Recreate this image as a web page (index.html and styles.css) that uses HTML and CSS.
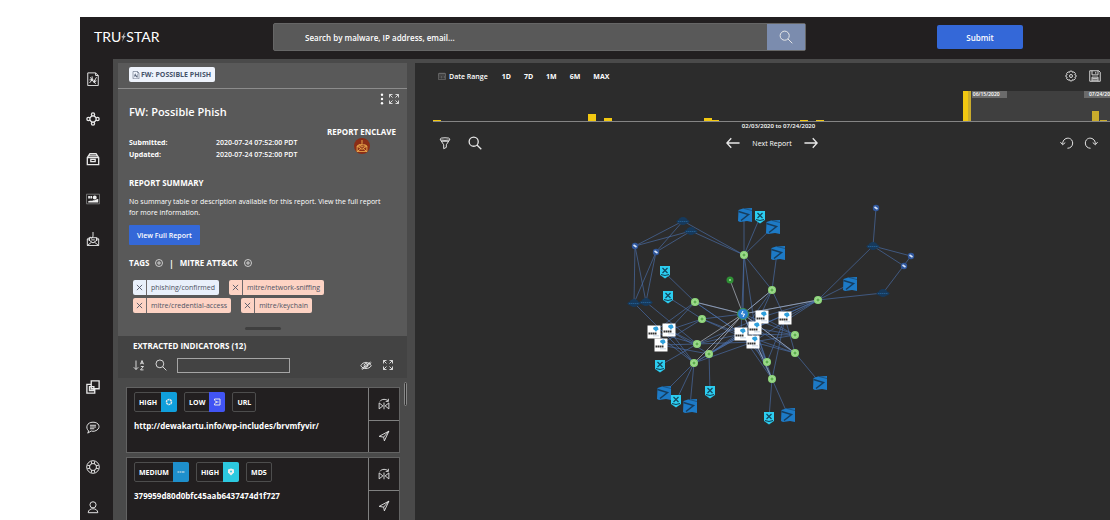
FILE: index.html
```
<!DOCTYPE html>
<html lang="en">
<head>
    <meta charset="UTF-8">
    <meta name="viewport" content="width=device-width, initial-scale=1.0">
    <title>TruSTAR</title>
    <link rel="stylesheet" href="styles.css">
</head>
<body>
    <!-- Shared icons -->
    <svg class="sprite" aria-hidden="true">
        <symbol id="i-search" viewBox="0 0 16 16"><circle cx="6.5" cy="6.5" r="5.2"/><path d="M10.200 10.200l5 5"/></symbol>
        <symbol id="i-report" viewBox="0 0 16 16"><path d="M2 1h9l3 3v11.500H2zM11 1v3h3"/><path d="M4 12.500l3-3.500 2 2 3-5M5 6l2 3M9 11l2 2.500M9 11l3-1M4 9h3M7 9V5"/><circle cx="7" cy="9" r="1"/><circle cx="9.5" cy="11" r="1"/></symbol>
        <symbol id="i-expand" viewBox="0 0 16 16"><path d="M2 6V2h4M10 2h4v4M14 10v4h-4M6 14H2v-4M2 2l4 4M14 2l-4 4M14 14l-4-4M2 14l4-4"/></symbol>
        <symbol id="i-plus" viewBox="0 0 16 16"><circle cx="8" cy="8" r="7"/><path d="M8 4v8M4 8h8"/></symbol>
        <symbol id="i-mirror" viewBox="0 0 16 16"><path d="M1.500 6.500v8l5-4zM14.500 6.500v8l-5-4zM8 6v9M2.500 4.500C5 1 11 1 13.500 4M13.800 1v3.500h-3.500"/></symbol>
        <symbol id="i-send" viewBox="0 0 16 16"><path d="M14.500 1.500L8.500 14.500 7.500 9.500 1.500 8.500zM14.500 1.500l-7 8"/></symbol>
        <symbol id="i-mail" viewBox="0 0 16 16"><path d="M1.500 8v7.500h13V8L12 6.500M4 6.500L1.500 8 8 12.500 14.500 8M1.500 15.500l5-4M14.500 15.500l-5-4M4 9.500v-3h8v3M8 0v4.500c0 3.500-3.500 3-3 1M6 9h4"/></symbol>
    </svg>

    <div class="app">
        <header class="topbar">
            <div class="logo">TRU<svg viewBox="0 0 8 16" aria-hidden="true"><path d="M6 0L5 6l3 1-3 2-3 7 1-7-3-1 3-2z"/></svg>STAR</div>
            <form class="search">
                <input type="text" aria-label="Search" placeholder="Search by malware, IP address, email...">
                <button type="button" aria-label="Search"><svg class="icon"><use href="#i-search"/></svg></button>
            </form>
            <button class="btn submit-btn" type="button">Submit</button>
        </header>

        <div class="body">
            <nav class="sidebar">
                <a href="#" aria-label="Reports"><svg class="icon"><use href="#i-report"/></svg></a>
                <a href="#" aria-label="Graph"><svg class="icon bold" viewBox="0 0 16 16"><path d="M4.200 6.800l2.600-2.600M9.200 4.200l2.600 2.600M11.800 9.200l-2.600 2.600M6.800 11.800L4.200 9.200"/><circle cx="8" cy="2.800" r="1.800"/><circle cx="13.200" cy="8" r="1.800"/><circle cx="8" cy="13.200" r="1.800"/><circle cx="2.800" cy="8" r="1.800"/></svg></a>
                <a href="#" aria-label="Archive"><svg class="icon bold" viewBox="0 0 16 16"><path d="M1.500 6.500l3-4.500h7l3 4.500v8h-13zM1.500 6.500h13M3.500 4.500h9M5.500 8.500h5V11h-5z"/></svg></a>
                <a href="#" aria-label="Dashboard"><svg class="icon" viewBox="0 0 16 16"><path class="dim" d="M.5 2.500h15v11H.5z"/><path class="solid" d="M2.500 4.500h2v3h-2zM5 4.500h2v3H5zM10 4a2 2 0 1 1 0 4.500A2.200 2.200 0 0 1 10 4zM2.500 10.500c3-1 4 0 6-1 2 0 4-2 5.500-1.500V12H2.500z"/></svg></a>
                <a href="#" aria-label="Phishing"><svg class="icon"><use href="#i-mail"/></svg></a>
                <a href="#" class="push" aria-label="Copy"><svg class="icon bold" viewBox="0 0 16 16"><path d="M6 1h9v9H6zM6 5H1v10h9v-5M4 7.500h5V12H4z"/></svg></a>
                <a href="#" aria-label="Chat"><svg class="icon" viewBox="0 0 16 16"><path d="M3 12.500C-1 9 1 2.500 8 2.500s9 6 4.500 9C9 14 6 12.500 6 12.500L2 15zM4.500 6h7M4.500 8h7M4.500 10h5"/></svg></a>
                <a href="#" aria-label="Help"><svg class="icon" viewBox="0 0 16 16"><circle cx="8" cy="8" r="7.200"/><circle cx="8" cy="8" r="4"/><path d="M6 1.500l.5 3M10 1.500l-.5 3M6 14.500l.5-3M10 14.500l-.5-3M1.500 6l3 .5M1.500 10l3-.5M14.500 6l-3 .5M14.500 10l-3-.5"/></svg></a>
                <a href="#" aria-label="Profile"><svg class="icon" viewBox="0 0 16 16"><circle cx="8" cy="5.500" r="3.500"/><path d="M2.500 14.500c0-6 11-6 11 0z"/></svg></a>
            </nav>

            <section class="panel">
                <div class="report">
                    <div class="tabs">
                        <a class="tab" href="#"><svg class="icon xs"><use href="#i-report"/></svg>FW: POSSIBLE PHISH</a>
                    </div>
                    <div class="report-body">
                        <div class="report-tools">
                            <button type="button" aria-label="More"><svg class="icon dots" viewBox="0 0 4 14"><circle cx="2" cy="2" r="1.4"/><circle cx="2" cy="7" r="1.4"/><circle cx="2" cy="12" r="1.4"/></svg></button>
                            <button type="button" aria-label="Expand"><svg class="icon sm"><use href="#i-expand"/></svg></button>
                        </div>
                        <h1>FW: Possible Phish</h1>
                        <div class="meta">
                            <dl>
                                <dt>Submitted:</dt><dd>2020-07-24 07:52:00 PDT</dd>
                                <dt>Updated:</dt><dd>2020-07-24 07:52:00 PDT</dd>
                            </dl>
                            <div class="enclave">
                                <h2>REPORT ENCLAVE</h2>
                                <span class="enclave-icon"><svg class="icon sm"><use href="#i-mail"/></svg></span>
                            </div>
                        </div>
                        <h2>REPORT SUMMARY</h2>
                        <p>No summary table or description available for this report. View the full report for more information.</p>
                        <button class="btn" type="button">View Full Report</button>
                        <div class="tag-heads">
                            <h2>TAGS</h2>
                            <button type="button" aria-label="Add tag"><svg class="icon xs"><use href="#i-plus"/></svg></button>
                            <span>|</span>
                            <h2>MITRE ATT&amp;CK</h2>
                            <button type="button" aria-label="Add technique"><svg class="icon xs"><use href="#i-plus"/></svg></button>
                        </div>
                        <div class="tags">
                            <span class="tag blue"><button type="button" aria-label="Remove"><svg class="icon x" viewBox="0 0 8 8"><path d="M1 1l6 6M7 1L1 7"/></svg></button><span>phishing/confirmed</span></span>
                            <span class="tag"><button type="button" aria-label="Remove"><svg class="icon x" viewBox="0 0 8 8"><path d="M1 1l6 6M7 1L1 7"/></svg></button><span>mitre/network-sniffing</span></span>
                            <span class="tag"><button type="button" aria-label="Remove"><svg class="icon x" viewBox="0 0 8 8"><path d="M1 1l6 6M7 1L1 7"/></svg></button><span>mitre/credential-access</span></span>
                            <span class="tag"><button type="button" aria-label="Remove"><svg class="icon x" viewBox="0 0 8 8"><path d="M1 1l6 6M7 1L1 7"/></svg></button><span>mitre/keychain</span></span>
                        </div>
                        <div class="grip"></div>
                    </div>
                </div>

                <div class="indicators-head">
                    <h2>EXTRACTED INDICATORS (12)</h2>
                    <div class="filter-row">
                        <button type="button" aria-label="Sort"><svg class="icon sm" viewBox="0 0 16 16"><path d="M4 2v12M1 11l3 3 3-3M10 7l2-5 2 5M10.500 5.500h3M10.500 10h3.500l-4 4.500h4"/></svg></button>
                        <button type="button" aria-label="Search"><svg class="icon sm"><use href="#i-search"/></svg></button>
                        <input type="text" aria-label="Filter indicators">
                        <button type="button" class="push-right" aria-label="Hide"><svg class="icon sm" viewBox="0 0 16 16"><path d="M1 9c3-6 11-6 14 0-3 5-11 5-14 0zM2 13L14 4M3 14L15 5"/><circle cx="8" cy="8.500" r="2.500"/></svg></button>
                        <button type="button" aria-label="Expand"><svg class="icon sm"><use href="#i-expand"/></svg></button>
                    </div>
                </div>

                <div class="list-wrap">
                    <div class="list">
                        <article class="indicator">
                            <div class="indicator-main">
                                <div class="badges">
                                    <span class="badge">HIGH<i class="c-sky"><svg class="icon xs" viewBox="0 0 16 16"><circle cx="8" cy="8" r="5" stroke-width="3" stroke-dasharray="4 1"/></svg></i></span>
                                    <span class="badge">LOW<i class="c-indigo"><svg class="icon xs" viewBox="0 0 16 16"><path d="M3 4V2h11v12H3v-2M3 5l5 3-5 3M8 8h3"/></svg></i></span>
                                    <span class="badge">URL</span>
                                </div>
                                <div class="value">http://dewakartu.info/wp-includes/brvmfyvir/</div>
                            </div>
                            <div class="actions">
                                <button type="button" aria-label="Whitelist"><svg class="icon sm"><use href="#i-mirror"/></svg></button>
                                <button type="button" aria-label="Send"><svg class="icon sm"><use href="#i-send"/></svg></button>
                            </div>
                        </article>
                        <article class="indicator">
                            <div class="indicator-main">
                                <div class="badges">
                                    <span class="badge">MEDIUM<i class="c-blue"><svg class="icon xs" viewBox="0 0 16 16"><path d="M1 8h4M6 8h3M10 8h5"/></svg></i></span>
                                    <span class="badge">HIGH<i class="c-cyan"><svg class="icon xs" viewBox="0 0 16 16"><path class="solid" d="M2 3l6-2 6 2v6l-6 6-6-6z"/><circle class="hole" cx="8" cy="7" r="2"/></svg></i></span>
                                    <span class="badge">MD5</span>
                                </div>
                                <div class="value">379959d80d0bfc45aab6437474d1f727</div>
                            </div>
                            <div class="actions">
                                <button type="button" aria-label="Whitelist"><svg class="icon sm"><use href="#i-mirror"/></svg></button>
                                <button type="button" aria-label="Send"><svg class="icon sm"><use href="#i-send"/></svg></button>
                            </div>
                        </article>
                    </div>
                    <div class="scroll"></div>
                </div>
            </section>

            <main class="main">
                <div class="range-row">
                    <svg class="icon xs dimmed" viewBox="0 0 16 16"><path d="M1 3h14v12H1zM1 6h14M4 1v3M8 1v3M12 1v3M4 8v5M7 8v5M10 8v5M13 8v5"/></svg>
                    <span class="range-label">Date Range</span>
                    <button type="button">1D</button>
                    <button type="button">7D</button>
                    <button type="button">1M</button>
                    <button type="button">6M</button>
                    <button type="button">MAX</button>
                    <div class="range-icons">
                        <button type="button" aria-label="Settings"><svg class="icon sm" viewBox="0 0 16 16"><path d="M6.500 1.500h3l.6 1.700 1.800-.7 2 2-.8 1.800 1.700.7v2l-1.700.7.8 1.800-2 2-1.800-.7-.6 1.700h-3l-.6-1.700-1.800.7-2-2 .8-1.800-1.700-.7V7l1.700-.7-.8-1.800 2-2 1.800.7z"/><circle cx="8" cy="8" r="2"/></svg></button>
                        <button type="button" aria-label="Save"><svg class="icon sm" viewBox="0 0 16 16"><path d="M1 1h12l2 2v12H1zM4 1v5.500h8V1M9 2.500V5M4 15V9.500h8V15M4.500 11.500h7M4.500 13.500h7"/></svg></button>
                    </div>
                </div>

                <div class="timeline">
                    <svg viewBox="0 0 677 30" preserveAspectRatio="none" aria-hidden="true">
                        <path class="bars" d="M0 29h8v1H0zM155 23h8v7h-8zM171 27h8v3h-8zM271 27h8v3h-8zM279 29h7v1h-7zM367 29h8v1h-8zM383 29h8v1h-8zM530 0h8v30h-8zM659 20h7v10h-7zM667 29h7v1h-7z"/>
                    </svg>
                    <div class="selection"><span>06/15/2020</span><span>07/24/20</span></div>
                </div>
                <div class="caption">02/03/2020 to 07/24/2020</div>

                <div class="graph-tools">
                    <div class="side">
                        <button type="button" aria-label="Filter"><svg class="icon" viewBox="0 0 16 16"><ellipse cx="8" cy="3.500" rx="5.500" ry="1.500"/><path d="M2.500 4L6.500 10v4.500l3-1.500v-3l4-6M4 6h8"/></svg></button>
                        <button type="button" aria-label="Find"><svg class="icon bold"><use href="#i-search"/></svg></button>
                    </div>
                    <div class="pager">
                        <button type="button" aria-label="Previous"><svg class="icon bold" viewBox="0 0 16 16"><path d="M15.500 8H1M6 2.500L1 8l5 5.500"/></svg></button>
                        <span>Next Report</span>
                        <button type="button" aria-label="Next"><svg class="icon bold" viewBox="0 0 16 16"><path d="M.5 8H15M10 2.500L15 8l-5 5.500"/></svg></button>
                    </div>
                    <div class="side end">
                        <button type="button" aria-label="Undo"><svg class="icon" viewBox="0 0 16 16"><path d="M3 9c0-8 11-9 11.500-1 0 4-3 6-6 6M.5 7L3 10l3-2.500"/></svg></button>
                        <button type="button" aria-label="Redo"><svg class="icon" viewBox="0 0 16 16"><path d="M13 9C13 1 2 0 1.500 8c0 4 3 6 6 6M15.500 7L13 10l-3-2.500"/></svg></button>
                    </div>
                </div>

                <svg class="graph" viewBox="415 156 695 364" role="img" aria-label="Indicator graph">
                    <defs>
                        <g id="n-green"><circle r="4" fill="#8fd67c"/><circle r="2" fill="#5cae4e" stroke="#c8edb8" stroke-width=".6"/></g>
                        <g id="n-link"><circle r="3.200" fill="#30579c"/><path d="M-1.500-1L1.500 1" stroke="#d8e4f8" stroke-width="1.600"/></g>
                        <g id="n-cloud"><ellipse rx="4.500" ry="4" fill="#173a5c"/><ellipse cy=".5" rx="6.500" ry="2.500" fill="#173a5c"/><path d="M-5 .5H5" stroke="#235b8d" stroke-dasharray="1.500 .5"/></g>
                        <g id="n-shield"><path d="M-5-6H5V3L0 6.500-5 3z" fill="#2ccdf0"/><path d="M-2.500-4l5 5M2.500-4l-5 5M-4 2.500L0 3.500 4 2.500" stroke="#12465c" stroke-width="1.200" fill="none"/></g>
                        <g id="n-arrow"><path d="M-6.500-5L-2-6.500 7-7V7l-5-1-7 1-2-1z" fill="#1d7ac6"/><path d="M-6.500-3.500L3.500-.5-4 5.500" fill="none" stroke="#163d5e" stroke-width="1.500"/><path d="M-1-6.500l8 2" stroke="#163d5e" stroke-width=".6"/></g>
                        <g id="n-misp"><path d="M-6.500-6.500h13v13h-13z" fill="#fff"/><path d="M-.5-2.500a1.500 1.500 0 0 1 1-2.500c1-1 4-.5 3.500 1 1 1 .5 2.500-1 2.200L2 0 1-1.500z" fill="#2e9fdc"/><path d="M-5.500 1.500H2.500" stroke="#333" stroke-width="1.800" stroke-dasharray="1.700 .4"/><path d="M-1 3.800h6" stroke="#bcd" stroke-width=".8"/></g>
                    </defs>
                    <g class="edges">
                        <path d="M683 221L635 246L691 231L656 252L683 221L744 255L691 231M635 246L634 303M635 246L646 302L656 252L634 303L694 363M646 302L697 344"/>
                        <path d="M744 255V215M744 255L760 217M744 255L773 227M744 255L743 314M744 255L741 334M744 255L755 328M744 255L772 290L777 253M772 290L741 334M772 290L755 328M772 290L785 318M772 290L743 314"/>
                        <path d="M818 300L873 246L876 208M873 246L911 256L883 293L818 300L850 284M873 246L904 266M818 300L743 314M818 300L741 334M818 300L755 328M818 300L753 342M818 300L762 317M818 300L785 318"/>
                        <path d="M695 302L664 272M695 302L743 314M695 302L741 334M695 302L753 342M695 302L669 330M695 302L654 332M702 319L668 297M702 319L743 314M702 319L741 334M702 319L753 342M702 319L669 330M702 319L660 345"/>
                        <path d="M697 344L741 334M697 344L753 342M697 344L762 317M697 344L669 330M697 344L654 332M697 344L660 345M709 354L741 334M709 354L755 328M709 354L762 317M709 354L669 330M709 354L660 345M709 354L710 392"/>
                        <path d="M694 363L664 393M694 363L676 401M694 363L690 406M694 363L669 330M694 363L654 332M694 363L741 334M694 363L755 328M694 363L753 342M697 344L659 366"/>
                        <path d="M795 335L743 314M795 335L741 334M795 335L755 328M795 335L753 342M795 335L762 317M795 353L743 314M795 353L741 334M795 353L755 328M795 353L753 342M795 353L785 318M795 353L820 383"/>
                        <path d="M767 362L743 314M767 362L741 334M767 362L755 328M767 362L753 342M767 362L785 318M772 379L743 314M772 379L741 334M772 379L755 328M772 379L753 342M772 379L785 318M772 379L769 418M772 379L788 415"/>
                        <path class="light" d="M730 280L743 314L697 344M743 314L709 354M743 314L694 363M743 314L772 290M743 314L818 300M743 314L695 302M743 314L772 379M743 314L795 353"/>
                    </g>
                    <use href="#n-cloud" x="683" y="221"/><use href="#n-cloud" x="691" y="231"/>
                    <use href="#n-cloud" x="634" y="303"/><use href="#n-cloud" x="646" y="302"/>
                    <use href="#n-cloud" x="873" y="246"/><use href="#n-cloud" x="883" y="293"/>
                    <use href="#n-link" x="635" y="246"/><use href="#n-link" x="656" y="252"/>
                    <use href="#n-link" x="876" y="208"/><use href="#n-link" x="911" y="256"/><use href="#n-link" x="904" y="266"/>
                    <use href="#n-arrow" x="745" y="215"/><use href="#n-arrow" x="773" y="227"/>
                    <use href="#n-arrow" x="778" y="253"/><use href="#n-arrow" x="850" y="284"/>
                    <use href="#n-arrow" x="664" y="393"/><use href="#n-arrow" x="690" y="406"/>
                    <use href="#n-arrow" x="820" y="383"/><use href="#n-arrow" x="788" y="415"/>
                    <use href="#n-shield" x="760" y="217"/><use href="#n-shield" x="665" y="272"/>
                    <use href="#n-shield" x="668" y="297"/><use href="#n-shield" x="660" y="366"/>
                    <use href="#n-shield" x="676" y="401"/><use href="#n-shield" x="710" y="392"/><use href="#n-shield" x="769" y="418"/>
                    <use href="#n-green" x="744" y="255"/><use href="#n-green" x="772" y="290"/><use href="#n-green" x="818" y="300"/>
                    <use href="#n-green" x="695" y="302"/><use href="#n-green" x="702" y="319"/><use href="#n-green" x="697" y="344"/>
                    <use href="#n-green" x="709" y="354"/><use href="#n-green" x="694" y="363"/><use href="#n-green" x="795" y="335"/>
                    <use href="#n-green" x="795" y="353"/><use href="#n-green" x="767" y="362"/><use href="#n-green" x="772" y="379"/>
                    <circle cx="730" cy="280" r="3.500" fill="#2f8f35"/><circle cx="730" cy="280" r="1" fill="#a8e0a0"/>
                    <circle cx="743" cy="314" r="5.500" fill="#2b7fd0" stroke="#3c9150"/><path d="M743 311l-1.500 3h3l-1.500 3" fill="none" stroke="#fff"/>
                    <use href="#n-misp" x="654" y="332"/><use href="#n-misp" x="669" y="330"/><use href="#n-misp" x="661" y="345"/>
                    <use href="#n-misp" x="762" y="317"/><use href="#n-misp" x="785" y="318"/><use href="#n-misp" x="741" y="334"/>
                    <use href="#n-misp" x="755" y="328"/><use href="#n-misp" x="753" y="342"/>
                </svg>
            </main>
        </div>
    </div>
</body>
</html>
```

FILE: styles.css
```
* {
    margin: 0;
    padding: 0;
    box-sizing: border-box;
}

body {
    font-family: 'Open Sans', 'Noto Sans', sans-serif;
    font-size: 7px;
    background: #fff;
    color: #fff;
    padding: 17px 0 0 80px;
}

button,
input {
    font: inherit;
    color: inherit;
    background: none;
    border: none;
}

button {
    display: flex;
    align-items: center;
    justify-content: center;
    cursor: pointer;
}

a {
    color: inherit;
    text-decoration: none;
}

.sprite {
    position: absolute;
    width: 0;
    height: 0;
}

.icon {
    display: block;
    flex: none;
    width: 14px;
    height: 14px;
    fill: none;
    stroke: #e8e8e8;
    stroke-width: 1.1;
}

.icon.sm {
    width: 12px;
    height: 12px;
    stroke-width: 1.2;
}

.icon.xs {
    width: 8px;
    height: 8px;
    stroke-width: 2;
}

.icon.x {
    width: 7px;
    height: 7px;
    stroke: #4d5263;
    stroke-width: 1;
}

.icon.bold {
    stroke-width: 1.5;
}

.icon.dimmed {
    stroke: #8c8c8c;
    stroke-width: 1;
}

.icon.dots {
    width: 4px;
    height: 12px;
    fill: #fff;
    stroke: none;
}

.solid {
    fill: #eee;
    stroke: none;
}

.dim {
    stroke: #777;
}

.hole {
    fill: #2cc9e0;
    stroke: none;
}

.app {
    display: flex;
    flex-direction: column;
    height: calc(100vh - 17px);
    background: #221f20;
    overflow: hidden;
}

/* Top bar */
.topbar {
    flex: none;
    display: flex;
    align-items: center;
    height: 42px;
    padding: 0 87px 2px 14px;
}

.logo {
    display: flex;
    align-items: center;
    width: 179px;
    font-family: 'Lato', sans-serif;
    font-size: 14px;
    line-height: 20px;
}

.logo svg {
    width: 5px;
    height: 12px;
    fill: #b8b8b8;
}

.search {
    flex: 1;
    display: flex;
    max-width: 533px;
    height: 28px;
    background: #595959;
    border: 1px solid #666;
    border-radius: 2px;
}

.search input {
    flex: 1;
    padding-left: 31px;
    font-size: 8px;
    font-weight: 600;
    outline: none;
}

.search input::placeholder {
    color: #fff;
    opacity: 1;
}

.search button {
    width: 38px;
    background: #7b8cae;
}

.btn {
    height: 20px;
    padding: 0 8px;
    background: #3468d8;
    border-radius: 1px;
    font-size: 7px;
    font-weight: 600;
}

.submit-btn {
    width: 86px;
    height: 24px;
    margin-left: auto;
    border-radius: 2px;
    font-size: 8px;
}

.body {
    flex: 1;
    display: flex;
    min-height: 0;
}

/* Left navigation */
.sidebar {
    flex: none;
    display: flex;
    flex-direction: column;
    align-items: center;
    gap: 16px;
    width: 33px;
    padding: 8px 8px 1px 0;
}

.sidebar a {
    display: flex;
    align-items: center;
    height: 24px;
}

.sidebar .push {
    margin-top: auto;
}

/* Report panel */
.panel {
    flex: none;
    display: flex;
    flex-direction: column;
    width: 302px;
    padding: 4px 8px 0 5px;
    background: #4a4a4a;
}

.report {
    flex: none;
    background: #595959;
}

.tabs {
    height: 26px;
    padding: 4px 11px;
    border-bottom: 1px solid #8c8c8c;
}

.tab {
    display: inline-flex;
    align-items: center;
    gap: 1px;
    height: 15px;
    padding: 0 4px 0 3px;
    background: #eef3fc;
    border-radius: 2px;
    color: #46536b;
    font-weight: 700;
}

.tab .icon {
    stroke: #46536b;
    stroke-width: 1;
}

.report-body {
    padding: 4px 11px 6px;
}

.report-tools {
    display: flex;
    justify-content: flex-end;
    gap: 4px;
    height: 11px;
    margin-right: -4px;
}

h1 {
    font-size: 11px;
    font-weight: 600;
    line-height: 16px;
}

h2 {
    font-size: 8px;
    font-weight: 700;
    line-height: 12px;
}

.meta {
    display: flex;
    justify-content: space-between;
    margin: 6px 0 16px;
}

dl {
    display: grid;
    grid-template-columns: 87px auto;
    align-content: start;
    padding-top: 11px;
    line-height: 12px;
}

dd {
    font-weight: 600;
}

dt {
    font-weight: 700;
}

.enclave {
    display: flex;
    flex-direction: column;
    align-items: center;
}

.enclave-icon {
    display: grid;
    place-items: center;
    width: 16px;
    height: 16px;
    background: #8a2d16;
    border-radius: 50%;
}

.enclave-icon .icon {
    stroke: #f0b050;
}

.report-body p {
    margin: 7px 0;
    padding-right: 10px;
    line-height: 11px;
}

.tag-heads {
    display: flex;
    align-items: center;
    gap: 6px;
    margin-top: 12px;
}

.tag-heads .icon {
    stroke-width: 1.6;
}

.tag-heads span {
    font-size: 8px;
    font-weight: 700;
}

.tags {
    display: flex;
    flex-wrap: wrap;
    gap: 3px 10px;
    margin-top: 11px;
    padding: 0 30px 0 4px;
}

.tag {
    display: flex;
    height: 15px;
    background: #fdd3c4;
    border-radius: 2px;
    color: #4d5263;
    line-height: 15px;
}

.tag.blue {
    background: #e9f0fb;
}

.tag button {
    width: 14px;
    border-right: 1px solid #6f6a6c;
}

.tag > span {
    padding: 0 4px;
}

.grip {
    width: 36px;
    height: 3px;
    margin: 14px auto 0;
    background: #3f3f3f;
    border-radius: 2px;
}

/* Indicators */
.indicators-head {
    flex: none;
    padding: 4px 13px 0 15px;
    background: #434343;
}

.filter-row {
    display: flex;
    align-items: center;
    gap: 10px;
    height: 26px;
}

.filter-row input {
    width: 113px;
    height: 15px;
    padding: 0 4px;
    border: 1px solid #a5a5a5;
}

.push-right {
    margin-left: auto;
}

.list-wrap {
    flex: 1;
    display: flex;
    gap: 4px;
    min-height: 0;
    padding: 9px 0 0 8px;
    overflow: hidden;
}

.list {
    flex: 1;
    display: flex;
    flex-direction: column;
    gap: 4px;
}

.indicator {
    flex: none;
    display: flex;
    height: 66px;
    background: #221f20;
    border: 1px solid #636363;
}

.indicator-main {
    flex: 1;
    padding: 4px 7px;
}

.badges {
    display: flex;
    gap: 7px;
}

.badge {
    display: flex;
    align-items: center;
    height: 20px;
    padding: 0 4px;
    border: 1px solid #4d4d4d;
    border-radius: 2px;
    font-weight: 700;
}

.badge i {
    display: grid;
    place-items: center;
    width: 16px;
    height: 20px;
    margin: 0 -5px 0 4px;
    border-radius: 0 2px 2px 0;
}

.c-sky {
    background: #109fdc;
}

.c-indigo {
    background: #4154f4;
}

.c-blue {
    background: #1e8fcc;
}

.c-cyan {
    background: #2cc9e0;
}

.value {
    margin-top: 8px;
    font-size: 8px;
    font-weight: 700;
    line-height: 12px;
}

.actions {
    display: flex;
    flex-direction: column;
    width: 31px;
    border-left: 1px solid #808080;
}

.actions button {
    flex: 1;
}

.actions button + button {
    border-top: 1px solid #808080;
}

.scroll {
    width: 3px;
    height: 24px;
    margin-top: -5px;
    border: 1px solid #888;
    border-radius: 2px;
    background: #2c2c2c;
}

/* Timeline and graph */
.main {
    flex: 1;
    min-width: 0;
    background: #2c2c2c;
    border-top: 4px solid #4a4a4a;
}

.range-row {
    display: flex;
    align-items: center;
    height: 28px;
    padding: 0 9px 2px 23px;
    font-weight: 600;
}

.range-label {
    margin: 0 14px 0 3px;
}

.range-row > button {
    margin-right: 13px;
    font-weight: 700;
}

.range-icons {
    display: flex;
    gap: 12px;
    margin-left: auto;
}

.timeline {
    position: relative;
    height: 31px;
    margin-left: 18px;
    border-bottom: 1px solid #858585;
}

.timeline svg {
    display: block;
    width: 100%;
    height: 30px;
}

.bars {
    fill: #f2c811;
}

.selection {
    position: absolute;
    top: 0;
    left: 79%;
    right: 0;
    bottom: 0;
    display: flex;
    justify-content: space-between;
    background: rgba(110, 110, 110, 0.3);
}

.selection span {
    height: 7px;
    background: #6b6b6b;
    font-size: 5px;
    font-weight: 600;
    line-height: 7px;
}

.selection span:first-child {
    margin-left: 4px;
    padding: 0 7px 0 1px;
}

.selection span:last-child {
    padding-left: 5px;
}

.caption {
    padding-left: 32px;
    font-size: 6px;
    font-weight: 600;
    line-height: 8px;
    text-align: center;
}

.graph-tools {
    display: flex;
    align-items: center;
    height: 26px;
    padding: 0 12px 0 23px;
}

.side {
    flex: 1;
    display: flex;
    gap: 16px;
}

.side.end {
    justify-content: flex-end;
    gap: 10px;
}

.pager {
    display: flex;
    align-items: center;
    gap: 12px;
    margin-left: 8px;
}

.graph {
    display: block;
    width: 100%;
}

.edges path {
    fill: none;
    stroke: #4a6da8;
    stroke-width: 0.8;
    opacity: 0.85;
}

.edges .light {
    stroke: #b5bcc9;
}
```
